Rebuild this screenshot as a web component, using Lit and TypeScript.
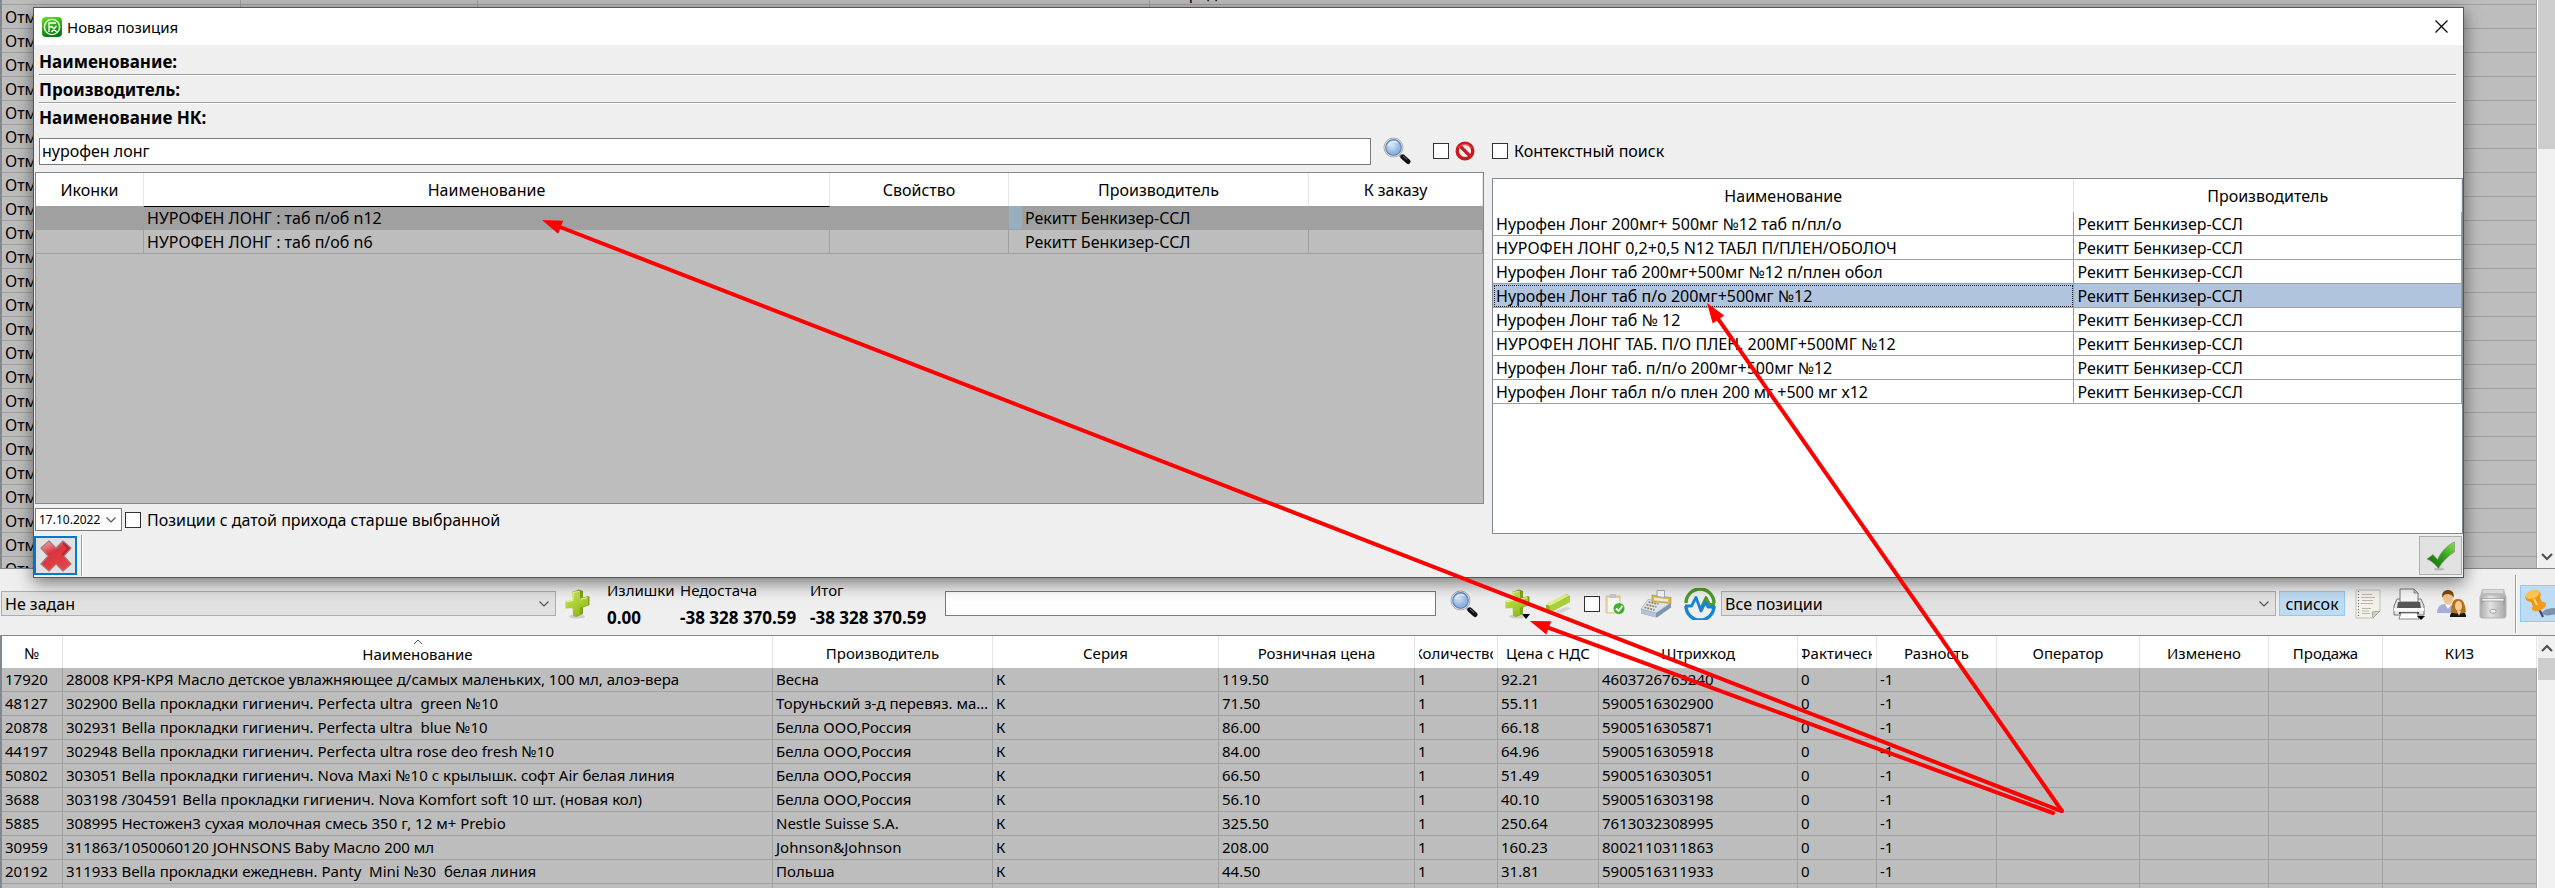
import { LitElement, html, css, svg } from 'lit';
import { customElement, state } from 'lit/decorators.js';
import { classMap } from 'lit/directives/class-map.js';

const STOCK_HEAD = ['№', 'Наименование', 'Производитель', 'Серия', 'Розничная цена', 'Количество', 'Цена с НДС', 'Штрихкод', 'Фактическ', 'Разность', 'Оператор', 'Изменено', 'Продажа', 'КИЗ'];

const STOCK: string[][] = [
  ['17920', '28008 КРЯ-КРЯ Масло детское увлажняющее д/самых маленьких, 100 мл, алоэ-вера', 'Весна', 'К', '119.50', '1', '92.21', '4603726763240', '0', '-1'],
  ['48127', '302900 Bella прокладки гигиенич. Perfecta ultra  green №10', 'Торуньский з-д перевяз. материалов', 'К', '71.50', '1', '55.11', '5900516302900', '0', '-1'],
  ['20878', '302931 Bella прокладки гигиенич. Perfecta ultra  blue №10', 'Белла ООО,Россия', 'К', '86.00', '1', '66.18', '5900516305871', '0', '-1'],
  ['44197', '302948 Bella прокладки гигиенич. Perfecta ultra rose deo fresh №10', 'Белла ООО,Россия', 'К', '84.00', '1', '64.96', '5900516305918', '0', '-1'],
  ['50802', '303051 Bella прокладки гигиенич. Nova Maxi №10 с крылышк. софт Air белая линия', 'Белла ООО,Россия', 'К', '66.50', '1', '51.49', '5900516303051', '0', '-1'],
  ['3688', '303198 /304591 Bella прокладки гигиенич. Nova Komfort soft 10 шт. (новая кол)', 'Белла ООО,Россия', 'К', '56.10', '1', '40.10', '5900516303198', '0', '-1'],
  ['5885', '308995 Нестожен3 сухая молочная смесь 350 г, 12 м+ Prebio', 'Nestle Suisse S.A.', 'К', '325.50', '1', '250.64', '7613032308995', '0', '-1'],
  ['30959', '311863/1050060120 JOHNSONS Baby Масло 200 мл', 'Johnson&Johnson', 'К', '208.00', '1', '160.23', '8002110311863', '0', '-1'],
  ['20192', '311933 Bella прокладки ежедневн. Panty  Mini №30  белая линия', 'Польша', 'К', '44.50', '1', '31.81', '5900516311933', '0', '-1'],
  ['', '', '', '', '', '', '', '', '', ''],
];

const MATCHES = [
  'Нурофен Лонг 200мг+ 500мг №12 таб п/пл/о',
  'НУРОФЕН ЛОНГ 0,2+0,5 N12 ТАБЛ П/ПЛЕН/ОБОЛОЧ',
  'Нурофен Лонг таб 200мг+500мг №12 п/плен обол',
  'Нурофен Лонг таб п/о 200мг+500мг №12',
  'Нурофен Лонг таб № 12',
  'НУРОФЕН ЛОНГ ТАБ. П/О ПЛЕН. 200МГ+500МГ №12',
  'Нурофен Лонг таб. п/п/о 200мг+500мг №12',
  'Нурофен Лонг табл п/о плен 200 мг +500 мг х12',
];

const VENDOR = 'Рекитт Бенкизер-ССЛ';

const base = css`
  *, *::before, *::after { box-sizing: border-box; }
  svg { display: block; flex: none; }
  button, input, select { font: inherit; color: inherit; margin: 0; border-radius: 0; }
  button { padding: 0; background: none; border: 0; display: flex; align-items: center; justify-content: center; }
  table { width: 100%; border-collapse: separate; border-spacing: 0; table-layout: fixed; }
  th { font-weight: 400; text-align: center; padding: 2px 4px 0; background: #fff; border-right: 1px solid #e5e5e5; }
  td { height: 24px; padding: 0 3px; line-height: 20px; border-right: 1px solid #a0a0a0; border-bottom: 1px solid #a0a0a0; white-space: pre; overflow: hidden; text-overflow: ellipsis; }
  .check { appearance: none; width: 16px; height: 16px; border: 1px solid #333; background: #fff; flex: none; }
  .check:checked { background: #333; box-shadow: inset 0 0 0 3px #fff; }
  .pick { display: grid; align-items: center; }
  .pick > * { grid-area: 1 / 1; }
  .pick select { appearance: none; width: 100%; outline: none; }
  .pick svg { justify-self: end; pointer-events: none; }
`;

const chevron = html`<svg width="12" height="8" viewBox="0 0 12 8"><path d="M1.500 1.500 6 6l4.500-4.500" fill="none" stroke="#555" stroke-width="1.200"/></svg>`;

const icons = {
  logo: html`<svg width="20" height="20" viewBox="0 0 20 20">
    <defs><linearGradient id="lg" x1="0" y1="0" x2="0.300" y2="1"><stop offset="0" stop-color="#5fe81c"/><stop offset="1" stop-color="#087a10"/></linearGradient></defs>
    <rect width="20" height="20" rx="4" fill="url(#lg)"/><circle cx="10" cy="10" r="7.600" fill="none" stroke="#fff" stroke-width="1.400"/>
    <path d="M7 15V6h7M7 10h3M9.500 9l5 6M14.500 9l-5 6" fill="none" stroke="#fff" stroke-width="1.300"/></svg>`,
  search: html`<svg width="28" height="28" viewBox="0 0 28 28">
    <defs><radialGradient id="sg" cx="0.400" cy="0.350"><stop offset="0" stop-color="#d8e8f8"/><stop offset="1" stop-color="#8fb4e0"/></radialGradient></defs>
    <path d="M17 18l2.500 2.500" stroke="#888" stroke-width="3"/>
    <path d="M20 20l5 4.500" stroke="#111" stroke-width="5" stroke-linecap="round"/><path d="M20 19l4 3.500" stroke="#777" stroke-width="1"/>
    <circle cx="10.500" cy="10.500" r="9.500" fill="#f4f4f4" stroke="#aaa"/><circle cx="10.500" cy="10.500" r="7.800" fill="url(#sg)" stroke="#5f84b8" stroke-width="1.200"/>
    <path d="M5.500 9a5.500 5 0 0 1 9-3" stroke="#fff" stroke-width="1.400" fill="none" opacity=".7"/></svg>`,
  ban: html`<svg width="20" height="20" viewBox="0 0 20 20"><circle cx="10" cy="10" r="7.800" fill="#f3eeee" stroke="#c8191f" stroke-width="3.400"/><path d="M4.600 4.600l10.800 10.800" stroke="#c8191f" stroke-width="3.400"/><path d="M3.500 7a7.500 7.500 0 0 1 13 0" stroke="#ea6a6a" stroke-width="1" fill="none"/></svg>`,
  cross: html`<svg width="34" height="34" viewBox="0 0 34 34">
    <defs><linearGradient id="cg" x1="0" y1="0" x2="0.500" y2="1"><stop offset="0" stop-color="#f6b3ba"/><stop offset="0.450" stop-color="#d8343f"/><stop offset="1" stop-color="#e8404a"/></linearGradient></defs>
    <path d="M10 2l7 7 7-7 8 7-7 8 7 8-8 7-7-7-7 7-8-7 7-8-7-8z" fill="url(#cg)" stroke="#a8787c" stroke-width="1.200" stroke-linejoin="round"/>
    <path d="M24 4l5.500 5-6 7" fill="none" stroke="#b91826" stroke-width="2" opacity=".7"/></svg>`,
  tick: html`<svg width="30" height="30" viewBox="0 0 30 30">
    <defs><linearGradient id="tg" x1="0" y1="1" x2="1" y2="0"><stop offset="0" stop-color="#0c6a08"/><stop offset="0.500" stop-color="#2f9a1c"/><stop offset="1" stop-color="#8be04a"/></linearGradient></defs>
    <ellipse cx="13" cy="28" rx="5" ry="1.500" fill="#bbb"/><path d="M1 18l6-4.500 4.500 5C15 11 21 4 28.500 1v10C22 15 16 21 12.500 27.500 9 23 5 19.500 1 18z" fill="url(#tg)" stroke="#7f9a78" stroke-width=".7"/></svg>`,
  plus: html`<svg width="26" height="30" viewBox="0 0 26 30">
    <defs><linearGradient id="pg" x1="0" y1="0" x2="0.500" y2="1"><stop offset="0" stop-color="#d2ea68"/><stop offset="0.500" stop-color="#b4d43c"/><stop offset="1" stop-color="#8fbb1c"/></linearGradient></defs>
    <ellipse cx="13" cy="27.500" rx="8" ry="2" fill="#cfcfcf"/>
    <path d="M8 3l7-2.500L19 2v6.500L24 7l1.500 1v8L19 18.500V25l-7 3-3-2z" fill="#7ea51a"/>
    <path d="M8 3l8-1.500v8L24 8v8l-8 2.500V26l-7 1.500V19l-7.500.500V12L8 11z" fill="url(#pg)"/>
    <path d="M9 11V3.500l6-1M2.500 12.700L9 11.500M17 10l6-1.300" fill="none" stroke="#eff8bf"/></svg>`,
  minus: html`<svg width="28" height="28" viewBox="0 0 28 28"><path d="M5 23l16-6 5 1-12 7z" fill="#d5d5d5"/><path d="M1 15l21-11 3 2v6L6 22l-5-2z" fill="#8fb81e"/><path d="M1 14L21 4l4 1.500L5 16z" fill="#dbef83"/><path d="M5 16L25 6v6L5 22z" fill="#acd03a"/></svg>`,
  drop: html`<svg class="drop" width="8" height="5" viewBox="0 0 8 5"><path d="M0 0h8L4 5z" fill="#000"/></svg>`,
  clip: html`<svg width="20" height="22" viewBox="0 0 20 22"><path d="M1 3h14v17H1z" fill="#e9d9ac" stroke="#d8c690"/><path d="M3 5h11v14H3z" fill="#f6f6f2"/><path d="M5 1h6v4H5z" fill="#c5c8cc"/><circle cx="14" cy="15.500" r="5.500" fill="#45b035"/><path d="M11 15.500l2.500 2.500 4-5" fill="none" stroke="#fff" stroke-width="1.800"/></svg>`,
  register: html`<svg width="32" height="28" viewBox="0 0 32 28"><path d="M1 19l15 4 15-10v4.500L17 27.500 1 23.500z" fill="#7d94b2"/><path d="M1 19l15 4v4.500L1 23.500z" fill="#b4c4d8"/><path d="M1 19L8 9.500l23 3L16 23z" fill="#dde4ec" stroke="#8b9bb0" stroke-width=".6"/><path d="M12 5l19 2.500v6l-19-2z" fill="#dcb95c" stroke="#a98a42" stroke-width=".6"/><path d="M14 7.500l14 1.800v2.400l-14-1.500z" fill="#f1ecd0"/><path d="M17 .5h7.500v7L17 6.500z" fill="#f6fafc" stroke="#8fa0b2" stroke-width=".8"/><path d="M8.500 12l10 2M6.500 14.700l10 2.300M4.500 17.300l10 2.700" stroke="#8f8a56" stroke-width="1.700" stroke-dasharray="2 1"/></svg>`,
  pulse: html`<svg width="32" height="32" viewBox="0 0 32 32"><path d="M2 15a14 14 0 0 1 28 0" fill="none" stroke="#4e9a2c" stroke-width="3.400"/><path d="M2 18a14 14 0 0 0 28 0" fill="none" stroke="#1384d6" stroke-width="3.400"/><path d="M17 20l5-10.500 3.500 7H31" fill="none" stroke="#4e9a2c" stroke-width="2.800" stroke-linejoin="round"/><path d="M1 18h6.500l4.500-8.500 5 13.500 4.500-9 2.500 5h6" fill="none" stroke="#1384d6" stroke-width="2.800" stroke-linejoin="round"/></svg>`,
  doc: html`<svg width="26" height="30" viewBox="0 0 26 30"><path d="M1 1h24v21l-7 7H1z" fill="#f3f1ec" stroke="#c4c1b8"/><path d="M25 22l-7 7-1-6z" fill="#d2cec0" stroke="#999588" stroke-width=".7"/><path d="M3.500 2v26" stroke="#777" stroke-width="1.200" stroke-dasharray="1 2"/><path d="M7 5.500h10M6 8.500h14M7 11.500h11M6 14.500h12M7 19.500h9M7 22h7M7 24.500h8" stroke="#bbb6a8" stroke-width="1"/></svg>`,
  printer: html`<svg width="32" height="32" viewBox="0 0 32 32"><path d="M4 11h24l3 7v9H1v-9z" fill="#e6e6e6" stroke="#777"/><path d="M7 14V1h14l4 4v9z" fill="#f6f6f6" stroke="#777"/><path d="M21 1v4h4z" fill="#ccc" stroke="#777" stroke-width=".8"/><path d="M5 14h22l1 6H4z" fill="#585858"/><path d="M1 20h30v3H1z" fill="#fafafa"/><path d="M6 24h20v2H6z" fill="#444"/><path d="M8 25h16l2 6H6z" fill="#fff" stroke="#888"/><path d="M24 28h8l-4 4z" fill="#000"/></svg>`,
  users: html`<svg width="30" height="28" viewBox="0 0 30 28"><path d="M0 23c0-7 4-9 9-9s9 2 9 8v1z" fill="#a5aed6"/><path d="M8 14l3 5 3-4z" fill="#fff"/><ellipse cx="11" cy="8" rx="5" ry="6.500" fill="#f4c48c"/><path d="M5.500 8C4 2 8 0 11 0s7 2 5.500 8c-1-3-3-4-6-4-3 0-4 1-5 4z" fill="#7c4a16"/><path d="M13 27c0-5 3-6 8-6s8 1 8 6z" fill="#161616"/><path d="M14 22c1-5 0-13 7-13s7 8 8 13c-3 2-12 2-15 0z" fill="#b57318"/><ellipse cx="21.500" cy="16" rx="3.500" ry="5" fill="#f8cf9c"/><path d="M20 21h4l-2 5z" fill="#f8cf9c"/></svg>`,
  cabinet: html`<svg width="28" height="30" viewBox="0 0 28 30"><defs><linearGradient id="kg"><stop offset="0" stop-color="#aaa"/><stop offset="0.400" stop-color="#e2e2e2"/><stop offset="1" stop-color="#a4a4a4"/></linearGradient></defs><path d="M3 0h22l2 7H1z" fill="#bdbdbd"/><path d="M4 1h20v3H4z" fill="#d8d8d8"/><rect x="1" y="6" width="26" height="23" rx="2" fill="url(#kg)" stroke="#b5b5b5"/><path d="M3 9.500h22v2.500H3zM3 12v3.500M25 12v3.500" fill="#f2f2f2" stroke="#888" stroke-width=".6"/><rect x="11" y="20.500" width="6" height="3.500" rx="1.500" fill="#eee" stroke="#888" stroke-width=".7"/></svg>`,
  pin: html`<svg width="31" height="30" viewBox="0 0 31 30"><path d="M18 24c2-4 8-5 14-5v6c-5 1-11 3-14-1z" fill="#7d93ad"/><path d="M15 20l4 8" stroke="#4f466a" stroke-width="2.200"/><path d="M6 10l9-4 4 10-9 4z" fill="#f09312"/><ellipse cx="9" cy="7" rx="8" ry="5.500" transform="rotate(-20 9 7)" fill="#ef9512"/><ellipse cx="8.500" cy="5.500" rx="7" ry="4" transform="rotate(-20 8.500 5.500)" fill="#ffc24a"/><ellipse cx="15" cy="17.500" rx="7.500" ry="4" transform="rotate(-24 15 17.500)" fill="#f59d14"/><path d="M10 10l3 6" stroke="#ffd98a" fill="none" stroke-width="2"/></svg>`,
};

@customElement('position-dialog')
class PositionDialog extends LitElement {
  @state() private picked = 3;

  static styles = [base, css`
    :host { display: flex; flex-direction: column; background: #efefef; border: 1px solid #555; box-shadow: 0 5px 16px rgba(0, 0, 0, .5); font-size: 16px; }
    .title { display: flex; align-items: center; gap: 5px; height: 37px; padding: 0 8px; background: #fff; font-size: 15px; }
    .title button { margin-left: auto; width: 28px; height: 28px; }
    .facts { display: grid; padding: 3px 7px 0 5px; font-size: 17px; font-weight: 700; }
    .fact { height: 28px; line-height: 28px; border-bottom: 1px solid #fff; box-shadow: inset 0 -1px #a0a0a0; }
    .fact:last-child { border: 0; box-shadow: none; }
    .panes { display: grid; grid-template-columns: 1449fr 971fr; gap: 8px; padding-left: 1px; }
    .pane { display: flex; flex-direction: column; min-width: 0; }
    .find { display: flex; align-items: center; height: 40px; padding: 0 9px 2px 4px; }
    .find input[type='text'] { flex: 1; min-width: 0; height: 27px; padding: 0 2px; border: 1px solid #7a7a7a; background: #fff; outline: none; }
    .find button { width: 28px; height: 28px; margin: 0 22px 0 12px; }
    .find label { display: flex; align-items: center; gap: 6px; }
    .context { display: flex; align-items: center; gap: 6px; height: 46px; padding-bottom: 8px; }
    .frame { flex: 1; border: 1px solid #828790; background: #bdbdbd; }
    .light { background: #fff; min-height: 356px; }
    th { height: 33px; padding-top: 0; }
    .c-icon { width: 108px; }
    .c-prop { width: 179px; }
    .c-vendor { width: 300px; }
    .c-order { width: 174px; }
    .c-match { width: 60%; }
    .goods .vendor { padding-left: 16px; }
    .current td { background: #a0a0a0; }
    .current .name { border-top: 1px solid #000; }
    .current .vendor { background: linear-gradient(to right, #97afbf 13px, #a0a0a0 13px); }
    .picked td { background: #b0c4de; }
    .picked .name { outline: 1px dotted #222; outline-offset: -2px; }
    .since { display: flex; align-items: center; gap: 3px; height: 30px; padding-top: 1px; }
    .since .pick { width: 87px; }
    .since select { height: 23px; padding: 0 20px 0 3px; border: 1px solid #7a7a7a; background: #fff; font-size: 12px; text-overflow: clip; }
    .since .pick svg { margin-right: 5px; }
    .since label { display: flex; align-items: center; gap: 6px; }
    .foot { display: flex; align-items: center; justify-content: space-between; height: 43px; }
    .cancel { width: 43px; height: 39px; border: 2px solid #0078d7; background: #e1e1e1; }
    .left { display: flex; gap: 4px; align-items: center; }
    .rule { width: 2px; height: 41px; border-left: 1px solid #a0a0a0; border-right: 1px solid #fff; }
    .ok { width: 43px; height: 39px; border: 1px solid #adadad; background: #e1e1e1; margin-right: 1px; }
  `];

  render() {
    return html`
      <header class="title">${icons.logo}<span>Новая позиция</span>
        <button aria-label="Закрыть"><svg width="13" height="13" viewBox="0 0 13 13"><path d="M.5.5l12 12M12.500.5l-12 12" stroke="#000" stroke-width="1.200"/></svg></button>
      </header>
      <div class="facts">
        <div class="fact">Наименование:</div>
        <div class="fact">Производитель:</div>
        <div class="fact">Наименование НК:</div>
      </div>
      <div class="panes">
        <section class="pane">
          <div class="find">
            <input type="text" aria-label="Поиск" .value=${'нурофен лонг'}>
            <button aria-label="Найти">${icons.search}</button>
            <label aria-label="Запрет"><input class="check" type="checkbox">${icons.ban}</label>
          </div>
          <div class="frame">
            <table class="goods">
              <colgroup><col class="c-icon"><col><col class="c-prop"><col class="c-vendor"><col class="c-order"></colgroup>
              <thead><tr><th>Иконки</th><th>Наименование</th><th>Свойство</th><th>Производитель</th><th>К заказу</th></tr></thead>
              <tbody>
                ${['НУРОФЕН ЛОНГ : таб п/об n12', 'НУРОФЕН ЛОНГ : таб п/об n6'].map((n, i) => html`
                  <tr class=${classMap({ current: i === 0 })}><td></td><td class="name">${n}</td><td></td><td class="vendor">${VENDOR}</td><td></td></tr>`)}
              </tbody>
            </table>
          </div>
          <div class="since">
            <div class="pick"><select aria-label="Дата"><option>17.10.2022</option></select>${chevron}</div>
            <label><input class="check" type="checkbox">Позиции с датой прихода старше выбранной</label>
          </div>
        </section>
        <section class="pane">
          <label class="context"><input class="check" type="checkbox">Контекстный поиск</label>
          <div class="frame light">
            <table>
              <colgroup><col class="c-match"><col></colgroup>
              <thead><tr><th>Наименование</th><th>Производитель</th></tr></thead>
              <tbody>
                ${MATCHES.map((n, i) => html`
                  <tr class=${classMap({ picked: i === this.picked })} @click=${() => { this.picked = i; }}><td class="name">${n}</td><td>${VENDOR}</td></tr>`)}
              </tbody>
            </table>
          </div>
        </section>
      </div>
      <footer class="foot">
        <div class="left"><button class="cancel" aria-label="Отмена">${icons.cross}</button><span class="rule"></span></div>
        <button class="ok" aria-label="Принять">${icons.tick}</button>
      </footer>`;
  }
}

@customElement('stock-toolbar')
class StockToolbar extends LitElement {
  static styles = [base, css`
    :host {
      display: grid; align-items: center; height: 68px; padding: 4px 0 0 1px; background: #efefef;
      border-top: 1px solid #828790; border-bottom: 1px solid #828790; font-size: 16px;
      grid-template-columns: 555fr 51px 338px 491fr 55px 52px 31px 60px 44px 43px 555fr 72px 39px 44px 41px 42px 6px 35px;
    }
    .pick select { height: 25px; padding: 0 24px 0 3px; border: 1px solid #adadad; background: #e1e1e1; }
    .pick svg { margin-right: 6px; }
    .cell { display: flex; align-items: center; justify-content: center; gap: 5px; }
    .first { justify-content: flex-start; padding-left: 8px; }
    .totals { display: grid; grid-template-columns: 73px 130px 1fr; grid-auto-rows: 27px; line-height: 27px; white-space: nowrap; font-size: 15px; }
    .sum { font-weight: 700; font-size: 17px; }
    .query { width: 100%; height: 25px; border: 1px solid #7a7a7a; background: #fff; outline: none; }
    .menu { display: grid; justify-items: center; }
    .menu > * { grid-area: 1 / 1; }
    .menu .drop { align-self: end; justify-self: end; }
    .list { width: 66px; height: 25px; background: #bedcf3; border: 1px solid #90c8f6; }
    .rule { width: 2px; height: 58px; border-left: 1px solid #a0a0a0; border-right: 1px solid #fff; margin-left: 1px; }
    .pin { width: 35px; height: 37px; overflow: hidden; justify-content: flex-start; padding-left: 3px; background: #bedcf3; border: 1px solid #90c8f6; border-right: 0; }
  `];

  render() {
    return html`
      <div class="pick"><select aria-label="Группа"><option>Не задан</option></select>${chevron}</div>
      <button class="cell first" aria-label="Добавить группу">${icons.plus}</button>
      <div class="totals">
        <span>Излишки</span><span>Недостача</span><span>Итог</span>
        <span class="sum">0.00</span><span class="sum">-38 328 370.59</span><span class="sum">-38 328 370.59</span>
      </div>
      <input class="query" type="text" aria-label="Поиск по списку">
      <button class="cell" aria-label="Найти">${icons.search}</button>
      <button class="cell" aria-label="Добавить"><span class="menu">${icons.plus}${icons.drop}</span></button>
      <button class="cell" aria-label="Удалить">${icons.minus}</button>
      <label class="cell" aria-label="Проверено"><input class="check" type="checkbox">${icons.clip}</label>
      <button class="cell" aria-label="Касса">${icons.register}</button>
      <button class="cell" aria-label="Мониторинг">${icons.pulse}</button>
      <div class="pick"><select aria-label="Фильтр"><option>Все позиции</option></select>${chevron}</div>
      <div class="cell"><button class="list">список</button></div>
      <button class="cell" aria-label="Документ">${icons.doc}</button>
      <button class="cell" aria-label="Печать">${icons.printer}</button>
      <button class="cell" aria-label="Пользователи">${icons.users}</button>
      <button class="cell" aria-label="Архив">${icons.cabinet}</button>
      <span class="rule"></span>
      <button class="pin" aria-label="Закрепить">${icons.pin}</button>`;
  }
}

/* Annotation arrow: a line from the tail to the tip with a filled head. */
const arrow = (x1: number, y1: number, x2: number, y2: number) => {
  const len = Math.hypot(x2 - x1, y2 - y1);
  const ux = (x2 - x1) / len;
  const uy = (y2 - y1) / len;
  const bx = x2 - ux * 20;
  const by = y2 - uy * 20;
  return svg`<line x1=${x1} y1=${y1} x2=${bx} y2=${by} stroke="#f00" stroke-width="4" stroke-linecap="round"/>
    <polygon fill="#f00" points="${x2},${y2} ${bx - uy * 7},${by + ux * 7} ${bx + uy * 7},${by - ux * 7}"/>`;
};

@customElement('app-root')
class AppRoot extends LitElement {
  static styles = [base, css`
    :host { display: flex; flex-direction: column; position: relative; height: 100vh; overflow: hidden; background: #efefef; color: #000; font-family: 'Noto Sans', 'Open Sans', sans-serif; font-size: 15px; }
    .region { display: flex; flex-basis: 0; min-height: 0; overflow: hidden; border-left: 2px solid #828790; }
    .upper { flex-grow: 9; }
    .lower { flex-grow: 4; }
    .grid { flex: 1; min-width: 0; overflow: hidden; background: #bdbdbd; }
    .scrolled { margin-top: -19px; }
    .scrolled td { font-size: 16px; }
    .bar { display: flex; flex-direction: column; width: 18px; background: #f0f0f0; align-items: center; border-left: 1px solid #fff; }
    .thumb { width: 100%; background: #cdcdcd; }
    .upper .thumb { flex: 0 0 149px; }
    .upper .arrow { margin: auto 0 7px; }
    .lower .arrow { margin: 8px 0 6px; }
    .lower .thumb { flex: 0 0 22px; }
    th { height: 32px; }
    .head { display: flex; flex-direction: column; align-items: center; overflow: hidden; white-space: nowrap; line-height: 20px; }
    .sorted { line-height: 18px; padding-bottom: 4px; }
    .o1 { width: 239px; } .o2 { width: 237px; } .o3 { width: 672px; }
    .k0 { width: 61px; } .k2 { width: 220px; } .k3 { width: 226px; } .k4 { width: 196px; } .k5 { width: 83px; } .k6 { width: 101px; } .k7 { width: 199px; }
    .k8 { width: 79px; } .k9 { width: 120px; } .k10 { width: 143px; } .k11 { width: 129px; } .k12 { width: 114px; } .k13 { width: 154px; }
    position-dialog { position: absolute; top: 7px; left: 33px; right: 91px; }
    .marks { position: absolute; inset: 0; width: 100%; height: 100%; pointer-events: none; }
  `];

  render() {
    const chev = (d: string) => html`<svg class="arrow" width="12" height="8" viewBox="0 0 12 8"><path d=${d} fill="none" stroke="#505050" stroke-width="2.200"/></svg>`;
    return html`
      <section class="region upper">
        <div class="grid">
          <table class="scrolled">
            <colgroup><col class="o1"><col class="o2"><col class="o3"><col></colgroup>
            <tbody>${Array.from({ length: 25 }, (_, i) => html`<tr><td>${i ? 'Отм' : ''}</td><td></td><td></td><td>${i ? '' : 'Распределен'}</td></tr>`)}</tbody>
          </table>
        </div>
        <div class="bar"><span class="thumb"></span>${chev('M1 1l5 5 5-5')}</div>
      </section>
      <stock-toolbar></stock-toolbar>
      <section class="region lower">
        <div class="grid">
          <table class="stock">
            <colgroup>${STOCK_HEAD.map((_, i) => html`<col class="k${i}">`)}</colgroup>
            <thead><tr>${STOCK_HEAD.map((h, i) => html`<th>${i === 1
              ? html`<span class="head sorted"><svg width="10" height="6" viewBox="0 0 10 6"><path d="M1 5l4-4 4 4" fill="none" stroke="#555"/></svg>${h}</span>`
              : html`<span class="head">${h}</span>`}</th>`)}</tr></thead>
            <tbody>${STOCK.map(r => html`<tr>${STOCK_HEAD.map((_, i) => html`<td>${r[i] ?? ''}</td>`)}</tr>`)}</tbody>
          </table>
        </div>
        <div class="bar">${chev('M1 7l5-5 5 5')}<span class="thumb"></span></div>
      </section>
      <position-dialog></position-dialog>
      <svg class="marks">${arrow(2061, 811, 542, 220)}${arrow(2053, 813, 1530, 621)}${arrow(2062, 811, 1707, 303)}</svg>`;
  }
}
